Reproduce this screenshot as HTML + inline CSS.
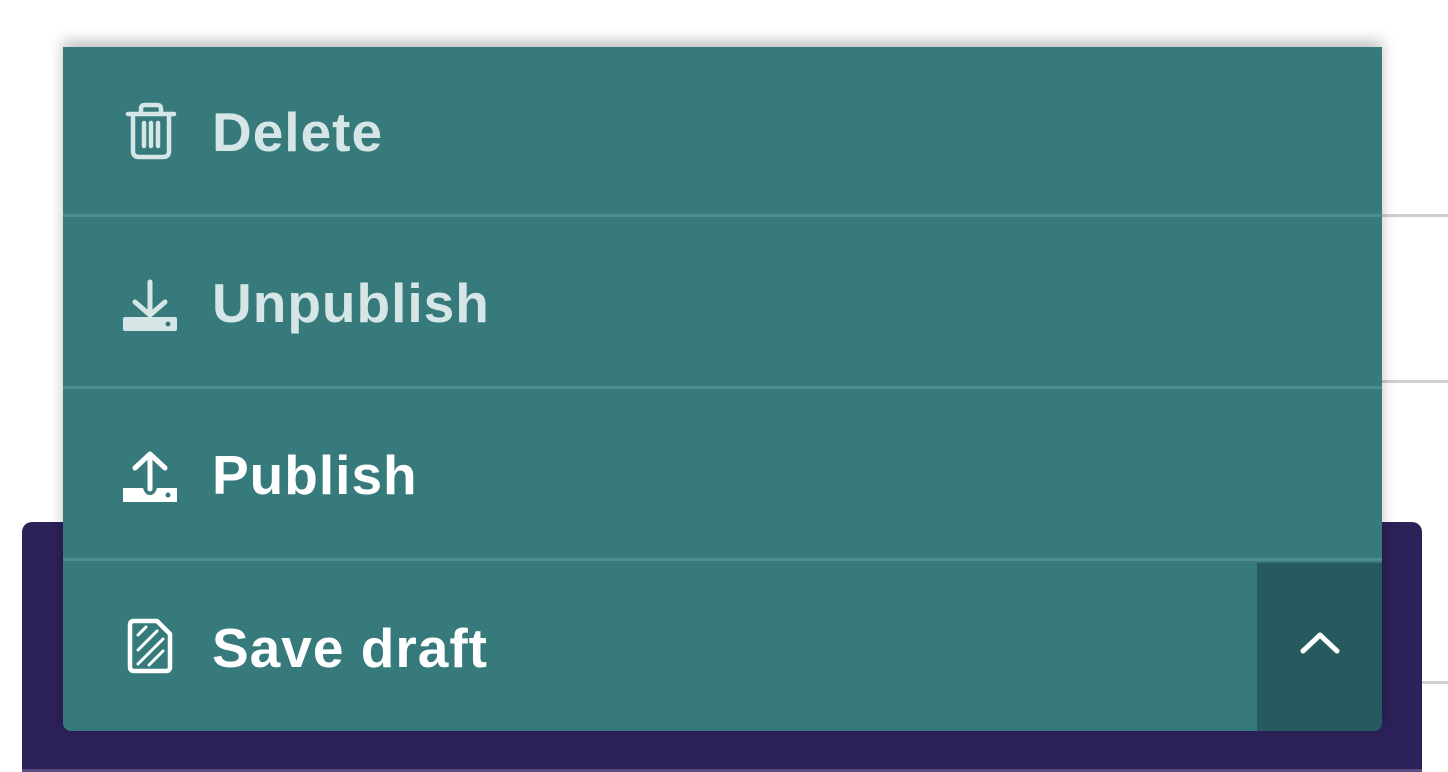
<!DOCTYPE html>
<html><head><style>
body{margin:0;width:1448px;height:772px;background:#fff;position:relative;overflow:hidden;font-family:"Liberation Sans",sans-serif}
.line{position:absolute;left:1382px;right:0;height:3px;background:#cfcfcf}
.bar{position:absolute;left:22px;top:522px;width:1400px;height:250px;background:#2c2159;border-radius:10px 10px 0 0}
.bar:after{content:"";position:absolute;left:0;right:0;bottom:0;height:3px;background:#5a4f80}
.menu{position:absolute;left:63px;top:47px;width:1319px;height:684px;background:#367a7c;border-radius:0 0 8px 8px;box-shadow:0 -6px 14px rgba(0,0,0,.25);overflow:hidden}
.row{position:absolute;left:0;width:1319px;height:168px}
.div{position:absolute;left:0;width:1319px;height:3px;background:#4e8d8c}
.t{position:absolute;left:149px;font-size:55px;font-weight:bold;line-height:1;letter-spacing:1px}
.ic{position:absolute;left:58px}
.btn{position:absolute;left:1193px;top:516px;width:126px;height:168px;background:#265a5e;border-left:1px solid #3f7474}
</style></head><body>
<div class="line" style="top:214px"></div>
<div class="line" style="top:380px"></div>
<div class="line" style="top:681px"></div>
<div class="bar"></div>
<div class="menu">
 <div class="row" style="top:0">
  <svg class="ic" style="top:55px;left:62px" width="52" height="58" viewBox="0 0 52 58" fill="none" stroke="#d6e6e6" stroke-width="4.5" stroke-linecap="round" stroke-linejoin="round"><path d="M3 12H49M16 12V7Q16 3 20 3H32Q36 3 36 7V12M8 12V49Q8 55 14 55H38Q44 55 44 49V12M19 21V44M26 21V44M33 21V44" /></svg>
  <div class="t" style="top:58px;color:#d6e6e6">Delete</div>
 </div>
 <div class="div" style="top:167px"></div>
 <div class="row" style="top:170px">
  <svg class="ic" style="top:61px" width="58" height="54" viewBox="0 0 58 54"><path d="M29 4V37M14 24L29 37L44 24" fill="none" stroke="#d6e6e6" stroke-width="5" stroke-linecap="round" stroke-linejoin="round"/><rect x="2" y="39" width="54" height="14" rx="2" fill="#d6e6e6"/><circle cx="47" cy="46" r="2.5" fill="#367a7c"/></svg>
  <div class="t" style="top:59px;color:#d6e6e6">Unpublish</div>
 </div>
 <div class="div" style="top:339px"></div>
 <div class="row" style="top:342px">
  <svg class="ic" style="top:60px" width="58" height="54" viewBox="0 0 58 54"><path d="M29 40V6M14 19L29 5L44 19" fill="none" stroke="#fff" stroke-width="5" stroke-linecap="round" stroke-linejoin="round"/><path d="M2 39H22Q24 46 29 46Q34 46 36 39H56V53H2Z" fill="#fff"/><circle cx="47" cy="46" r="2.5" fill="#367a7c"/></svg>
  <div class="t" style="top:59px;color:#fff">Publish</div>
 </div>
 <div class="div" style="top:511px"></div>
 <div class="row" style="top:514px">
  <svg class="ic" style="top:56px;left:64px" width="48" height="58" viewBox="0 0 48 58" fill="none" stroke="#fff" stroke-width="4.5" stroke-linejoin="round" stroke-linecap="round"><path d="M7 4H30L43 17V50Q43 54 39 54H7Q3 54 3 50V8Q3 4 7 4Z"/><path d="M11 18L19 10M11 33L30 14M11 47L36 22M22 48L36 34" stroke-width="3"/></svg>
  <div class="t" style="top:60px;color:#fff">Save draft</div>
 </div>
 <div class="btn"><svg style="position:absolute;left:42px;top:67px" width="42" height="26" viewBox="0 0 42 26"><path d="M4 21L21 5L38 21" fill="none" stroke="#fff" stroke-width="5" stroke-linecap="round" stroke-linejoin="round"/></svg></div>
</div>
</body></html>
